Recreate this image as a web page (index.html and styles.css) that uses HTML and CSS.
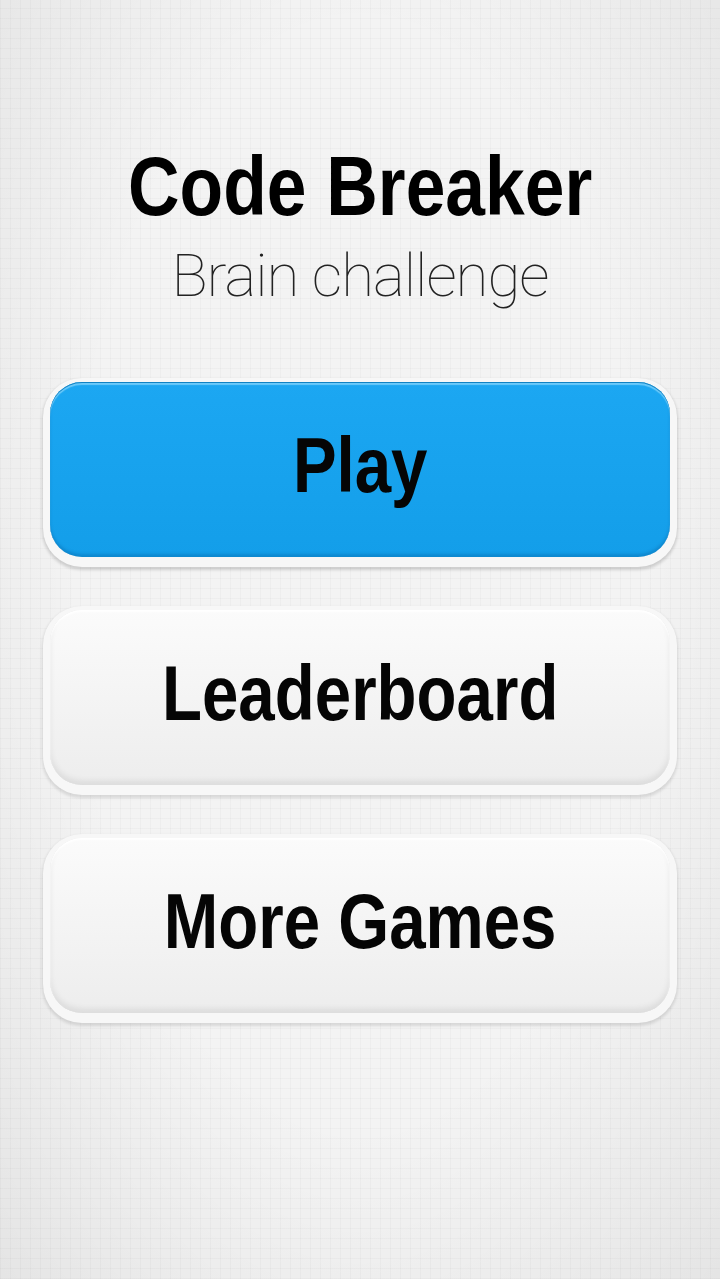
FILE: index.html
```html
<!DOCTYPE html>
<html lang="en">

<head>
    <meta charset="UTF-8">
    <meta name="viewport" content="width=device-width, initial-scale=1">
    <title>Code Breaker</title>
    <link rel="stylesheet" href="styles.css">
</head>

<body>
    <main class="menu">
        <header class="title-block">
            <h1 class="title"><span>Code Breaker</span></h1>
            <p class="subtitle">Brain challenge</p>
        </header>

        <nav class="menu-buttons">
            <button class="menu-btn menu-btn-play" type="button"><span>Play</span></button>
            <button class="menu-btn" type="button"><span>Leaderboard</span></button>
            <button class="menu-btn" type="button"><span>More Games</span></button>
        </nav>
    </main>
</body>

</html>
```

FILE: styles.css
```css
body {
    margin: 0;
    min-height: 100vh;
    font-family: "Liberation Sans", Arial, sans-serif;
    background-color: #f3f3f3;
    /* soft vignette over a faint graph-paper grid */
    background-image:
        radial-gradient(ellipse at 50% 45%, rgba(0, 0, 0, 0) 55%, rgba(0, 0, 0, 0.06) 100%),
        repeating-linear-gradient(90deg, rgba(0, 0, 0, 0.025) 0 1px, transparent 1px 10px),
        repeating-linear-gradient(0deg, rgba(0, 0, 0, 0.025) 0 1px, transparent 1px 10px);
}

.menu {
    display: flex;
    flex-direction: column;
    align-items: center;
    padding-top: 144px;
}

.title-block {
    text-align: center;
}

.title {
    margin: 0;
    font-size: 84px;
    line-height: 84px;
    font-weight: bold;
    color: #000;
}

/* condensed look */
.title span,
.menu-btn span {
    display: inline-block;
    transform: scaleX(0.85);
}

.subtitle {
    margin: 18px 0 0;
    font-family: Roboto, Lato, sans-serif;
    font-weight: 100;
    font-size: 60px;
    line-height: 60px;
    letter-spacing: -1px;
    color: #222;
}

.menu-buttons {
    display: flex;
    flex-direction: column;
    gap: 53px;
    margin-top: 76px;
}

.menu-btn {
    width: 620px;
    height: 175px;
    padding: 0 0 8px;
    border: none;
    border-radius: 32px;
    font-family: "Liberation Sans", Arial, sans-serif;
    font-size: 77px;
    font-weight: bold;
    line-height: 1;
    color: #050505;
    cursor: pointer;
    background: linear-gradient(#fbfbfb, #ededed);
    box-shadow:
        inset 0 2px 2px #fff,
        inset 0 -4px 6px rgba(0, 0, 0, 0.08),
        0 3px 0 7px #f7f7f7,
        0 5px 3px 8px rgba(0, 0, 0, 0.11);
}

.menu-btn-play {
    background: linear-gradient(#1ca7f2, #139ee9);
    box-shadow:
        inset 0 1px 0 #1182c4,
        inset 0 3px 1px rgba(160, 225, 255, 0.6),
        inset 0 -3px 3px rgba(0, 70, 130, 0.25),
        0 3px 0 7px #f7f7f7,
        0 5px 3px 8px rgba(0, 0, 0, 0.15);
}
```
